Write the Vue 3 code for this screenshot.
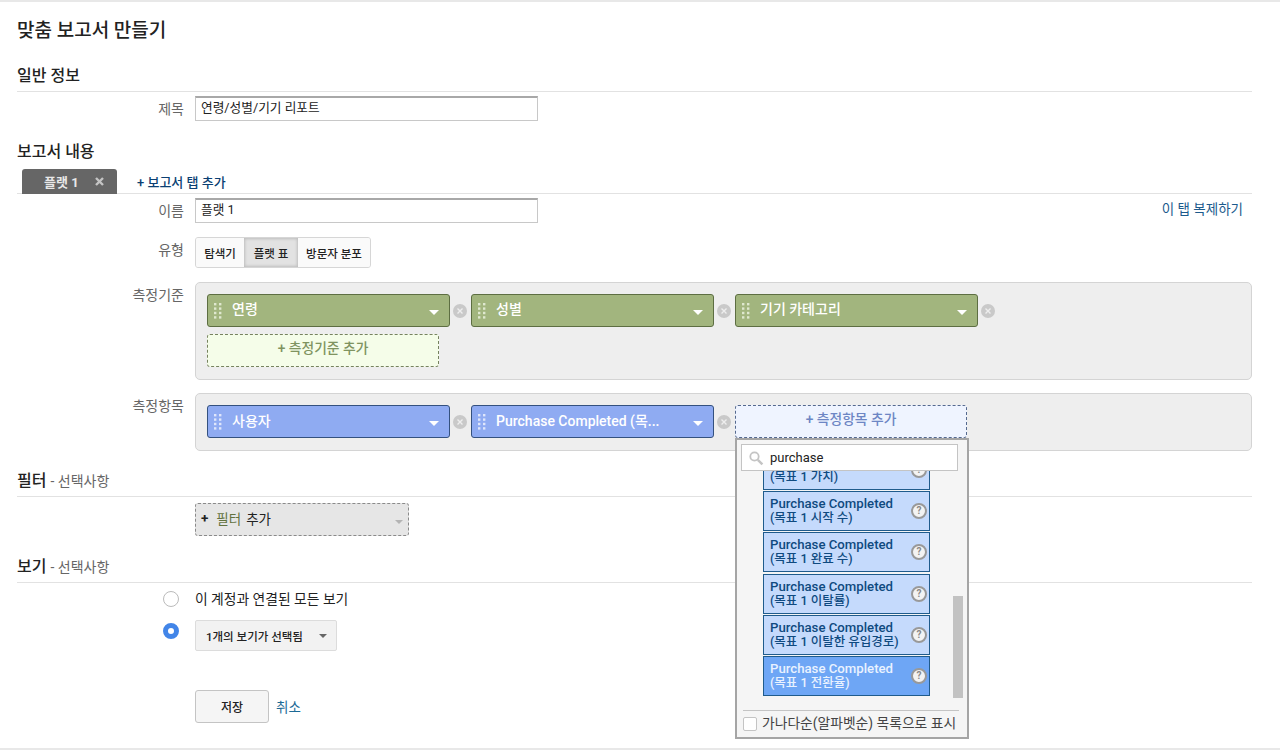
<script setup>
const dimensions = [
  { id: 1, label: '연령' },
  { id: 2, label: '성별' },
  { id: 3, label: '기기 카테고리' },
]

const metrics = [
  { id: 1, label: '사용자' },
  { id: 2, label: 'Purchase Completed (목...' },
]

const results = [
  { id: 1, sub: '(목표 1 가치)' },
  { id: 2, sub: '(목표 1 시작 수)' },
  { id: 3, sub: '(목표 1 완료 수)' },
  { id: 4, sub: '(목표 1 이탈률)' },
  { id: 5, sub: '(목표 1 이탈한 유입경로)' },
  { id: 6, sub: '(목표 1 전환율)', active: true },
]

const handleDots = [0, 1, 2, 3]
</script>

<template>
  <div class="page">
    <h1>맞춤 보고서 만들기</h1>

    <h2 class="first">일반 정보</h2>
    <div class="row title-row">
      <label>제목</label>
      <div class="text-input">연령/성별/기기 리포트</div>
    </div>

    <h2 class="content-head">보고서 내용</h2>
    <div class="tabs">
      <div class="tab">
        <span>플랫 1</span>
        <svg width="9" height="9" viewBox="0 0 9 9"><path d="M1 1l7 7M8 1l-7 7" stroke="#c4c4c4" stroke-width="2.4" /></svg>
      </div>
      <a class="add-tab">+ 보고서 탭 추가</a>
    </div>

    <div class="row name-row">
      <label>이름</label>
      <div class="text-input">플랫 1</div>
      <a class="duplicate">이 탭 복제하기</a>
    </div>

    <div class="row type-row">
      <label>유형</label>
      <div class="segments">
        <span class="seg">탐색기</span>
        <span class="seg selected">플랫 표</span>
        <span class="seg">방문자 분포</span>
      </div>
    </div>

    <div class="row dim-row">
      <label>측정기준</label>
      <div class="panel">
        <div class="chips">
          <div v-for="d in dimensions" :key="d.id" class="chip-wrap">
            <div class="chip green">
              <svg class="handle" width="8" height="16" viewBox="0 0 8 16">
                <g v-for="n in handleDots" :key="n" fill="#dfe8cf">
                  <rect x="0" :y="n * 4.4" width="2.4" height="2.4" />
                  <rect x="5" :y="n * 4.4" width="2.4" height="2.4" />
                </g>
              </svg>
              <span class="chip-text">{{ d.label }}</span>
              <span class="caret"></span>
            </div>
            <svg class="remove" width="14" height="14" viewBox="0 0 14 14">
              <circle cx="7" cy="7" r="7" fill="#c9c9c9" />
              <path d="M4.5 4.5l5 5M9.5 4.5l-5 5" stroke="#eee" stroke-width="1.4" />
            </svg>
          </div>
        </div>
        <div class="add-slot green-slot">+ 측정기준 추가</div>
      </div>
    </div>

    <div class="row metric-row">
      <label>측정항목</label>
      <div class="panel">
        <div class="chips">
          <div v-for="m in metrics" :key="m.id" class="chip-wrap">
            <div class="chip blue">
              <svg class="handle" width="8" height="16" viewBox="0 0 8 16">
                <g v-for="n in handleDots" :key="n" fill="#dfe6fb">
                  <rect x="0" :y="n * 4.4" width="2.4" height="2.4" />
                  <rect x="5" :y="n * 4.4" width="2.4" height="2.4" />
                </g>
              </svg>
              <span class="chip-text">{{ m.label }}</span>
              <span class="caret"></span>
            </div>
            <svg class="remove" width="14" height="14" viewBox="0 0 14 14">
              <circle cx="7" cy="7" r="7" fill="#c9c9c9" />
              <path d="M4.5 4.5l5 5M9.5 4.5l-5 5" stroke="#eee" stroke-width="1.4" />
            </svg>
          </div>
          <div class="add-wrap">
            <div class="add-slot blue-slot">+ 측정항목 추가</div>

            <div class="picker">
              <div class="search">
                <svg width="16" height="16" viewBox="0 0 16 16">
                  <circle cx="6.5" cy="6.5" r="4.2" fill="none" stroke="#c4c4c4" stroke-width="1.8" />
                  <path d="M9.8 9.8l4.6 4.6" stroke="#c4c4c4" stroke-width="2.4" />
                </svg>
                <span>purchase</span>
              </div>
              <div class="picker-body">
                <div class="results">
                  <div v-for="r in results" :key="r.id" class="result" :class="{ active: r.active }">
                    <div class="result-text">
                      <div>Purchase Completed</div>
                      <div class="result-sub">{{ r.sub }}</div>
                    </div>
                    <span class="help">?</span>
                  </div>
                </div>
                <div class="scrollbar"></div>
              </div>
              <div class="picker-foot">
                <span class="checkbox"></span>
                <span>가나다순(알파벳순) 목록으로 표시</span>
              </div>
            </div>
          </div>
        </div>
      </div>
    </div>

    <h2 class="filter-head">필터 <small>- 선택사항</small></h2>
    <div class="row filter-row">
      <label></label>
      <div class="filter-box">
        <b>+</b>
        <span class="filter-word">필터</span>
        <span>추가</span>
        <span class="filter-caret"></span>
      </div>
    </div>

    <h2 class="view-head">보기 <small>- 선택사항</small></h2>
    <div class="row radio-row">
      <label class="radio-cell"><span class="radio"></span></label>
      <span class="radio-text">이 계정과 연결된 모든 보기</span>
    </div>
    <div class="row radio-row second">
      <label class="radio-cell"><span class="radio on"></span></label>
      <div class="view-select">
        <span>1개의 보기가 선택됨</span>
        <span class="select-caret"></span>
      </div>
    </div>

    <div class="row actions">
      <label></label>
      <button type="button" class="save">저장</button>
      <a class="cancel">취소</a>
    </div>
  </div>
</template>

<style>
html,
body {
  margin: 0;
  background: #fff;
  overflow: hidden;
}
</style>

<style scoped>
.page {
  box-sizing: border-box;
  height: 750px;
  padding: 0 28px 0 17px;
  border-top: 2px solid #e8e8e8;
  border-bottom: 2px solid #e8e8e8;
  font-family: Roboto, "Noto Sans CJK KR", sans-serif;
  font-size: 13px;
  color: #222;
  margin-bottom: 2px;
}

h1 {
  margin: 0;
  padding-top: 17px;
  font-size: 19px;
  line-height: 24px;
  font-weight: 500;
  color: #222;
}

h2 {
  margin: 0;
  font-size: 16px;
  line-height: 20px;
  font-weight: 500;
  color: #222;
}

h2 small {
  font-size: 14px;
  font-weight: 400;
  color: #666;
}

h2.first {
  margin-top: 23px;
  padding-bottom: 5px;
  border-bottom: 1px solid #e2e2e2;
}

.content-head {
  margin-top: 21px;
}

.filter-head,
.view-head {
  padding-bottom: 5px;
  border-bottom: 1px solid #e2e2e2;
}

.filter-head {
  margin-top: 20px;
}

.view-head {
  margin-top: 21px;
}

.row {
  display: flex;
  align-items: flex-start;
}

.row > label {
  flex: none;
  box-sizing: border-box;
  width: 167px;
  padding-top: 2px;
  margin-right: 11px;
  text-align: right;
  font-size: 14px;
  line-height: 22px;
  color: #666;
}

.title-row {
  margin-top: 4px;
}

.name-row {
  margin-top: 4px;
}

.type-row {
  margin-top: 14px;
}

.dim-row {
  margin-top: 14px;
}

.metric-row {
  margin-top: 13px;
}

.text-input {
  box-sizing: border-box;
  width: 343px;
  height: 25px;
  padding-left: 5px;
  background: #fff;
  border: 1px solid #c8c8c8;
  border-top: 2px solid #a8a8a8;
  font-size: 12.7px;
  line-height: 20px;
  color: #222;
}

.duplicate {
  margin-left: auto;
  margin-right: 9px;
  font-size: 13.5px;
  line-height: 22px;
  color: #1c5a8c;
}

.tabs {
  display: flex;
  align-items: center;
  height: 24px;
  margin-top: 7px;
  border-bottom: 1px solid #e2e2e2;
}

.tab {
  box-sizing: border-box;
  display: flex;
  align-items: center;
  justify-content: space-between;
  width: 95px;
  height: 25px;
  margin: 0 0 -1px 5px;
  padding: 0 13px 0 22px;
  background: #666;
  border-radius: 3px 3px 0 0;
  font-size: 13px;
  font-weight: 700;
  color: #e8e8e8;
}

.add-tab {
  margin-left: 20px;
  font-size: 13px;
  font-weight: 500;
  color: #0b3f73;
}

.segments {
  display: flex;
  box-sizing: border-box;
  height: 31px;
  border: 1px solid #d6d6d6;
  border-radius: 3px;
  background: #f7f7f7;
  overflow: hidden;
}

.seg {
  display: flex;
  align-items: center;
  justify-content: center;
  font-size: 11.5px;
  font-weight: 500;
  color: #222;
  width: 48px;
  background: #fafafa;
}

.seg.selected {
  width: 54px;
  background: #e2e2e2;
  box-shadow: inset 0 0 3px 1px #bdbdbd;
}

.seg:last-child {
  width: 72px;
}

.panel {
  flex: 1;
  box-sizing: border-box;
  padding: 11px 11px 12px;
  background: #eee;
  border: 1px solid #d4d4d4;
  border-radius: 5px;
}

.chips {
  display: flex;
}

.chip-wrap {
  display: flex;
  align-items: center;
  margin-right: 4px;
}

.chip {
  box-sizing: border-box;
  display: flex;
  align-items: center;
  width: 243px;
  height: 33px;
  margin-right: 3px;
  padding: 0 10px 0 6px;
  border-radius: 3px;
  color: #fff;
  font-size: 14px;
  font-weight: 500;
}

.chip.green {
  background: #a2b57e;
  border: 1px solid #5d6e42;
}

.chip.blue {
  background: #8fabf2;
  border: 1px solid #34517f;
}

.handle {
  flex: none;
}

.chip-text {
  flex: 1;
  margin-left: 10px;
  white-space: nowrap;
  overflow: hidden;
  margin-top: -3px;
}

.green .chip-text {
  margin-top: -5px;
}

.caret {
  flex: none;
  width: 0;
  height: 0;
  margin-top: 3px;
  border-left: 5px solid transparent;
  border-right: 5px solid transparent;
  border-top: 5px solid #fff;
}

.remove {
  flex: none;
}

.add-slot {
  box-sizing: border-box;
  width: 232px;
  height: 33px;
  text-align: center;
  font-size: 13.8px;
  font-weight: 500;
  line-height: 27px;
  border-radius: 3px;
}

.green-slot {
  margin-top: 7px;
  background: #f5fde9;
  border: 1px dashed #76825f;
  color: #7f9360;
}

.blue-slot {
  background: #eff4ff;
  border: 1px dashed #55698f;
  color: #6d86c4;
}

.add-wrap {
  position: relative;
}

.picker {
  position: absolute;
  z-index: 2;
  top: 33px;
  left: 0;
  box-sizing: border-box;
  width: 234px;
  height: 301px;
  background: #f5f5f5;
  border: 2px solid #a5a5a5;
  display: flex;
  flex-direction: column;
}

.search {
  box-sizing: border-box;
  display: flex;
  align-items: center;
  gap: 6px;
  flex: none;
  width: 217px;
  height: 27px;
  margin: 4px 0 0 4px;
  padding-left: 6px;
  background: #fff;
  border: 1px solid #c4c4c4;
  font-size: 13px;
  color: #222;
  position: relative;
  z-index: 1;
}

.picker-body {
  display: flex;
  height: 228px;
  flex: none;
}

.results {
  box-sizing: border-box;
  width: 167px;
  margin-left: 26px;
  padding-bottom: 3px;
  display: flex;
  flex-direction: column;
  justify-content: flex-end;
  gap: 1.25px;
  overflow: hidden;
}

.result {
  flex: none;
  box-sizing: border-box;
  display: flex;
  align-items: center;
  justify-content: space-between;
  height: 40px;
  padding: 0 2px 0 6px;
  background: #c5dafc;
  border: 1px solid #1f5b8c;
  color: #0f4a80;
  font-size: 13.2px;
  font-weight: 500;
  line-height: 14px;
}

.result-sub {
  font-size: 12.5px;
}

.result.active {
  background: #6ea6f5;
  color: #e9f2ff;
}

.result-text {
  white-space: nowrap;
}

.help {
  flex: none;
  box-sizing: border-box;
  width: 16px;
  height: 16px;
  border-radius: 50%;
  background: #f3f3f3;
  border: 2px solid #999;
  color: #888;
  font-size: 10px;
  font-weight: 700;
  line-height: 12px;
  text-align: center;
}

.scrollbar {
  width: 10px;
  height: 102px;
  margin: 125px 0 0 23px;
  background: #c2c2c2;
}

.picker-foot {
  display: flex;
  align-items: center;
  gap: 5px;
  margin: 11px 8px 0 6px;
  padding-top: 4px;
  border-top: 1px solid #c4c4c4;
  font-size: 13.8px;
  line-height: 17px;
  color: #444;
  white-space: nowrap;
}

.checkbox {
  flex: none;
  box-sizing: border-box;
  width: 14px;
  height: 14px;
  background: #fff;
  border: 1px solid #c4c4c4;
  border-radius: 2px;
}

.filter-row {
  margin-top: 6px;
}

.filter-box {
  box-sizing: border-box;
  display: flex;
  align-items: center;
  gap: 5px;
  width: 214px;
  height: 33px;
  padding: 0 5px 3px;
  background: #e6e6e6;
  border: 1px dashed #8a8a8a;
  border-radius: 3px;
  font-size: 13.5px;
  color: #222;
}

.filter-word {
  margin-left: 3px;
  color: #63733f;
}

.filter-caret {
  margin-left: auto;
  margin-right: 0;
  margin-top: 7px;
  width: 0;
  height: 0;
  border-left: 4px solid transparent;
  border-right: 4px solid transparent;
  border-top: 4px solid #b4b4b4;
}

.radio-row {
  align-items: center;
  margin-top: 5px;
}

.radio-row.second {
  margin-top: 10px;
  align-items: flex-start;
}

.row > label.radio-cell {
  display: flex;
  justify-content: flex-end;
  align-items: center;
  padding-top: 0;
  padding-right: 5px;
  height: 22px;
}

.radio {
  box-sizing: border-box;
  width: 16px;
  height: 16px;
  border-radius: 50%;
  background: #fff;
  border: 1px solid #bbb;
}

.radio.on {
  background: #fff;
  border: 5px solid #4285e8;
}

.radio-text {
  font-size: 13.8px;
  line-height: 22px;
  color: #222;
}

.view-select {
  box-sizing: border-box;
  display: flex;
  align-items: center;
  justify-content: space-between;
  width: 142px;
  height: 31px;
  padding: 0 9px 0 10px;
  background: #f2f2f2;
  border: 1px solid #dcdcdc;
  border-radius: 2px;
  font-size: 11.5px;
  font-weight: 500;
  color: #222;
}

.select-caret {
  width: 0;
  height: 0;
  border-left: 4px solid transparent;
  border-right: 4px solid transparent;
  border-top: 4px solid #666;
}

.actions {
  align-items: center;
  margin-top: 39px;
}

.save {
  box-sizing: border-box;
  width: 74px;
  height: 33px;
  background: #f5f5f5;
  border: 1px solid #c4c4c4;
  border-radius: 3px;
  font-family: inherit;
  font-size: 12px;
  font-weight: 500;
  color: #222;
}

.cancel {
  margin-left: 7px;
  margin-top: -2px;
  font-size: 13.5px;
  color: #1c6a96;
}
</style>
